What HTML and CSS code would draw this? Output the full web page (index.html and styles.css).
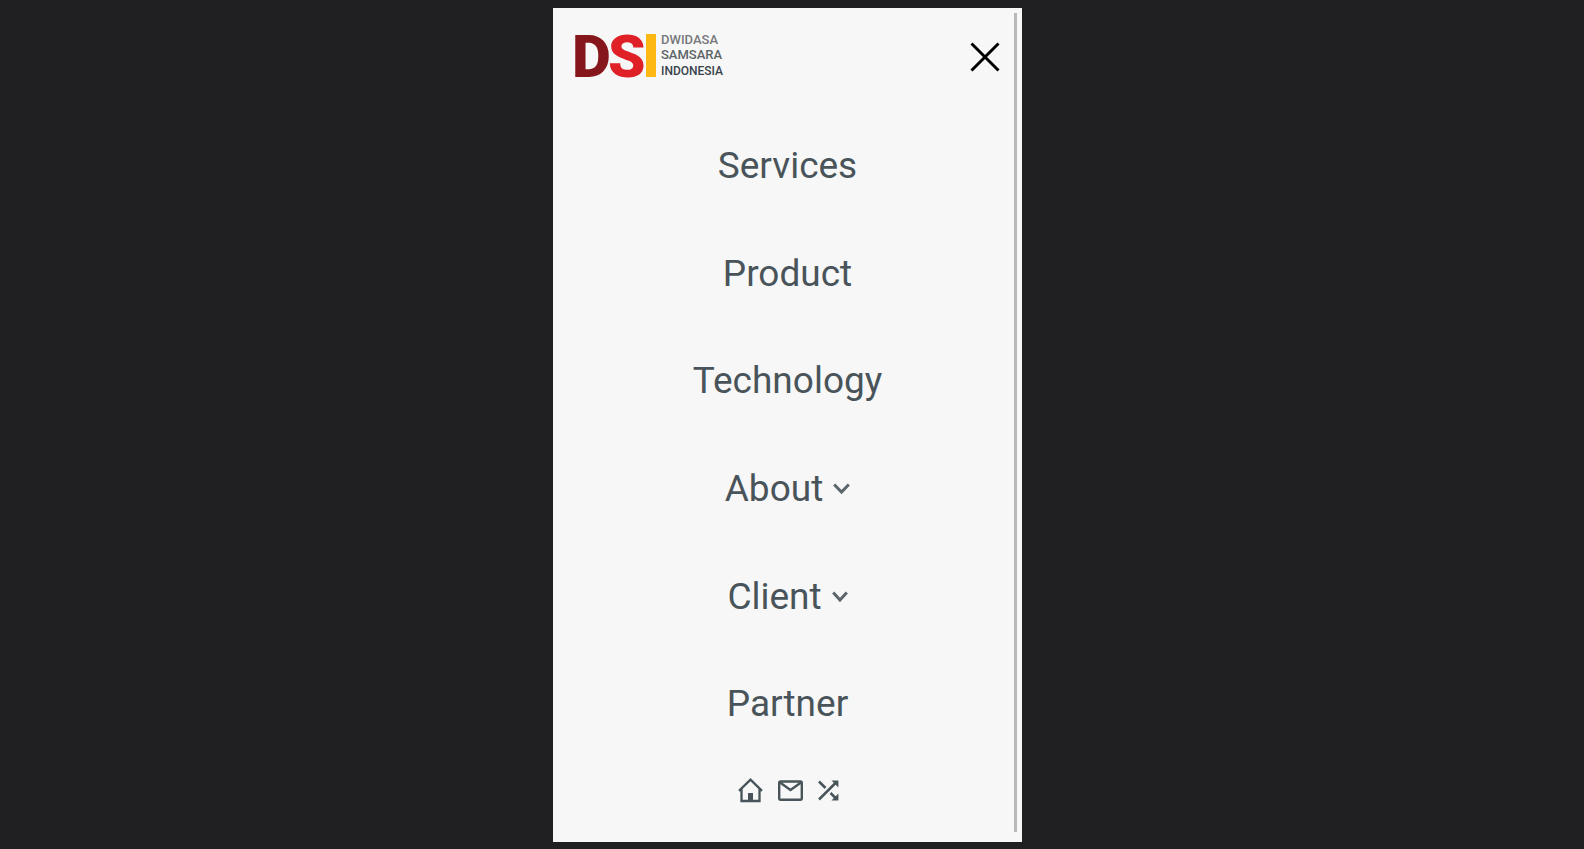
FILE: index.html
```html
<!DOCTYPE html>
<html lang="en">
<head>
<meta charset="utf-8">
<meta name="viewport" content="width=device-width, initial-scale=1">
<title>Dwidasa Samsara Indonesia</title>
<link rel="stylesheet" href="styles.css">
</head>
<body>
<div class="panel">
  <header class="header">
    <a class="logo" href="#" aria-label="DSI home">
      <svg width="148" height="48" viewBox="0 0 148 48">
        <text class="logo-mark" y="45"><tspan x="-3" fill="#85161b">D</tspan><tspan x="33" fill="#df2027">S</tspan></text>
        <rect x="71" y="2" width="10" height="43" fill="#fdb813"/>
        <text class="logo-name" x="86" y="12" fill="#77787b">DWIDASA</text>
        <text class="logo-name" x="86" y="27" fill="#5d6467">SAMSARA</text>
        <text class="logo-name logo-name-last" x="86" y="43" fill="#38444b">INDONESIA</text>
      </svg>
    </a>
    <button class="close" type="button" aria-label="Close menu">
      <svg width="30" height="30" viewBox="0 0 30 30" fill="none" stroke="#000" stroke-width="3"><path d="M1.500 1.500l27 27M28.500 1.500l-27 27"/></svg>
    </button>
  </header>
  <nav class="menu">
    <a class="item" href="#">Services</a>
    <a class="item" href="#">Product</a>
    <a class="item" href="#">Technology</a>
    <button class="item" type="button">About
      <svg class="chevron" width="17" height="12" viewBox="0 0 17 12"><path d="M1.200 1.500l7.300 7.500 7.300-7.500"/></svg>
    </button>
    <button class="item" type="button">Client
      <svg class="chevron" width="16" height="12" viewBox="0 0 16 12"><path d="M1.200 1.500l6.800 7.500 6.800-7.500"/></svg>
    </button>
    <a class="item" href="#">Partner</a>
  </nav>
  <footer class="links">
    <a href="#" aria-label="Home">
      <svg width="25" height="25" viewBox="0 0 25 25"><path d="M1 12.800L12.500 1.700 24 12.800M3.500 10.800V23h18V10.800" fill="none" stroke="currentColor" stroke-width="2.300"/><path d="M10 15h5v8h-5z" fill="currentColor"/></svg>
    </a>
    <a href="#" aria-label="Mail">
      <svg width="25" height="25" viewBox="0 0 25 25" fill="none" stroke="currentColor" stroke-width="2.400"><rect x="1.200" y="3.500" width="22.600" height="18.200" rx="1.500"/><path d="M2 4.500l10.500 7.500 10.500-7.500"/></svg>
    </a>
    <a href="#" aria-label="Shuffle">
      <svg width="21" height="25" viewBox="0 0 21 25"><path d="M1 3.500l6.500 6.500M1 21.500l16.500-16.500M12.500 15l5 5" fill="none" stroke="currentColor" stroke-width="2.500"/><path d="M13.500 2.500h6.900v6.900zM20.400 15.600v6.900h-6.900z" fill="currentColor"/></svg>
    </a>
  </footer>
</div>
</body>
</html>
```
FILE: styles.css
```css
* {
  box-sizing: border-box;
}

body {
  margin: 0;
  padding: 8px 9px 7px 0;
  background: #202022;
  font-family: Roboto, "Liberation Sans", sans-serif;
}

.panel {
  position: relative;
  display: flex;
  flex-direction: column;
  width: 100%;
  max-width: 469px;
  min-height: calc(100vh - 15px);
  margin: 0 auto;
  background: #f7f7f7;
  color: #49545a;
}

/* Scroll indicator over the right edge */
.panel::after {
  content: "";
  position: absolute;
  top: 5px;
  right: 5px;
  bottom: 10px;
  width: 3px;
  background: #b9b9b9;
}

.header {
  display: flex;
  justify-content: space-between;
  padding: 24px 22px 0;
}

.logo,
.logo svg,
.close svg,
.links a,
.links svg {
  display: block;
}

.logo svg {
  overflow: visible;
}

.logo-mark {
  font-size: 60px;
  font-weight: 900;
}

.logo-name {
  font-size: 13px;
  font-weight: 500;
}

.logo-name-last {
  font-size: 12px;
}

.close {
  align-self: flex-end;
  margin-bottom: 8px;
  padding: 0;
  border: 0;
  background: none;
}

.menu {
  display: flex;
  flex: 1;
  flex-direction: column;
  padding-top: 32px;
}

.item {
  display: flex;
  flex: 1;
  align-items: center;
  justify-content: center;
  gap: 10px;
  padding: 0;
  border: 0;
  background: none;
  color: inherit;
  font: inherit;
  font-size: 37px;
  line-height: 48px;
  text-decoration: none;
}

.chevron {
  fill: none;
  stroke: #5b666b;
  stroke-width: 3;
}

.links {
  display: flex;
  justify-content: center;
  gap: 15px;
  padding: 20px 0 39px 2px;
}

.links a {
  color: #49545a;
}
```
